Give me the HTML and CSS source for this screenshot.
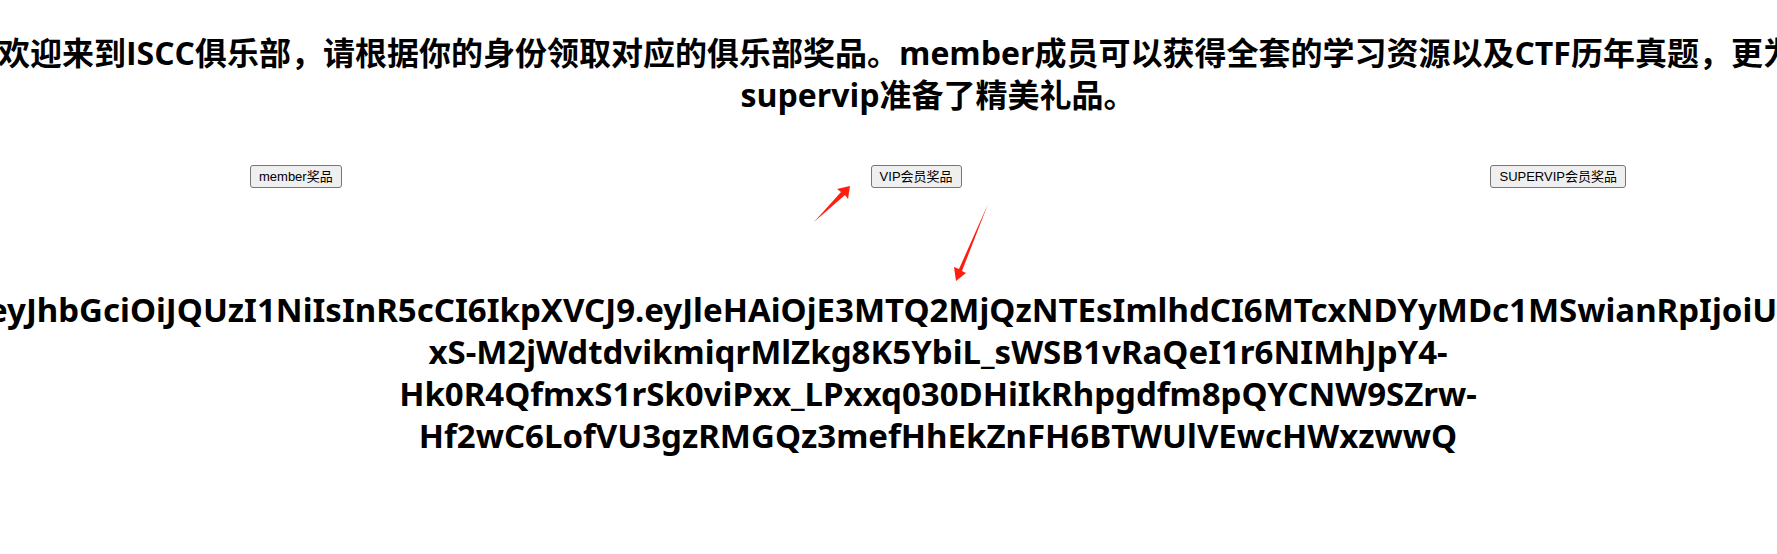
FILE: index.html
```html
<!DOCTYPE html>
<html lang="zh-CN">
<head>
<meta charset="utf-8">
<title>ISCC俱乐部</title>
<link rel="stylesheet" href="styles.css">
</head>
<body>
<div class="viewport">
<main class="page">
  <h1 class="heading">
    <span class="line line-title">欢迎来到ISCC俱乐部，请根据你的身份领取对应的俱乐部奖品。member成员可以获得全套的学习资源以及CTF历年真题，更为</span>
    <span class="line">supervip准备了精美礼品。</span>
  </h1>
  <div class="actions">
    <button class="prize" type="button">member奖品</button>
    <button class="prize" type="button">VIP会员奖品</button>
    <button class="prize" type="button">SUPERVIP会员奖品</button>
  </div>
  <h1 class="heading token">
    <span class="line line-token">eyJhbGciOiJQUzI1NiIsInR5cCI6IkpXVCJ9.eyJleHAiOjE3MTQ2MjQzNTEsImlhdCI6MTcxNDYyMDc1MSwianRpIjoiU</span>
    <span class="line">xS-M2jWdtdvikmiqrMlZkg8K5YbiL_sWSB1vRaQeI1r6NIMhJpY4-</span>
    <span class="line">Hk0R4QfmxS1rSk0viPxx_LPxxq030DHiIkRhpgdfm8pQYCNW9SZrw-</span>
    <span class="line">Hf2wC6LofVU3gzRMGQz3mefHhEkZnFH6BTWUlVEwcHWxzwwQ</span>
  </h1>
  <svg class="arrows" viewBox="0 0 180 100" width="180" height="100" aria-hidden="true">
    <path d="M4 42 L31 12 L27 9 L40 6 L38 19 L35 15 Z"/>
    <path d="M178 24 L149 89 L144 87 L146 101 L156 93 L152 91 Z"/>
  </svg>
</main>
</div>
</body>
</html>
```
FILE: styles.css
```css
body {
  margin: 0;
  background: #fff;
  color: #000;
}

.viewport {
  overflow: clip;
}

.page {
  position: relative;
  width: calc(100% + 99px);
  padding-top: 32px;
}

.heading {
  margin: 0;
  font: 700 32px/42px "Open Sans", "Noto Sans CJK SC", sans-serif;
  text-align: center;
}

.token {
  font-family: "Noto Sans", sans-serif;
  font-size: 33px;
}

.line {
  display: block;
  white-space: nowrap;
}

.line-title,
.line-token {
  text-align: left;
}

.line-title {
  margin-left: -2px;
}

.line-token {
  margin-left: -12px;
}

.actions {
  display: flex;
  justify-content: space-between;
  padding: 49px 250px 101px;
}

.prize {
  height: 23px;
  padding: 1px 8px;
  border: 1px solid #767676;
  border-radius: 3px;
  background: #efefef;
  color: #000;
  font: 13px/19px "Liberation Sans", "Noto Sans CJK SC", sans-serif;
}

.arrows {
  position: absolute;
  left: 810px;
  top: 180px;
  overflow: visible;
  fill: #ff1f10;
}
```
